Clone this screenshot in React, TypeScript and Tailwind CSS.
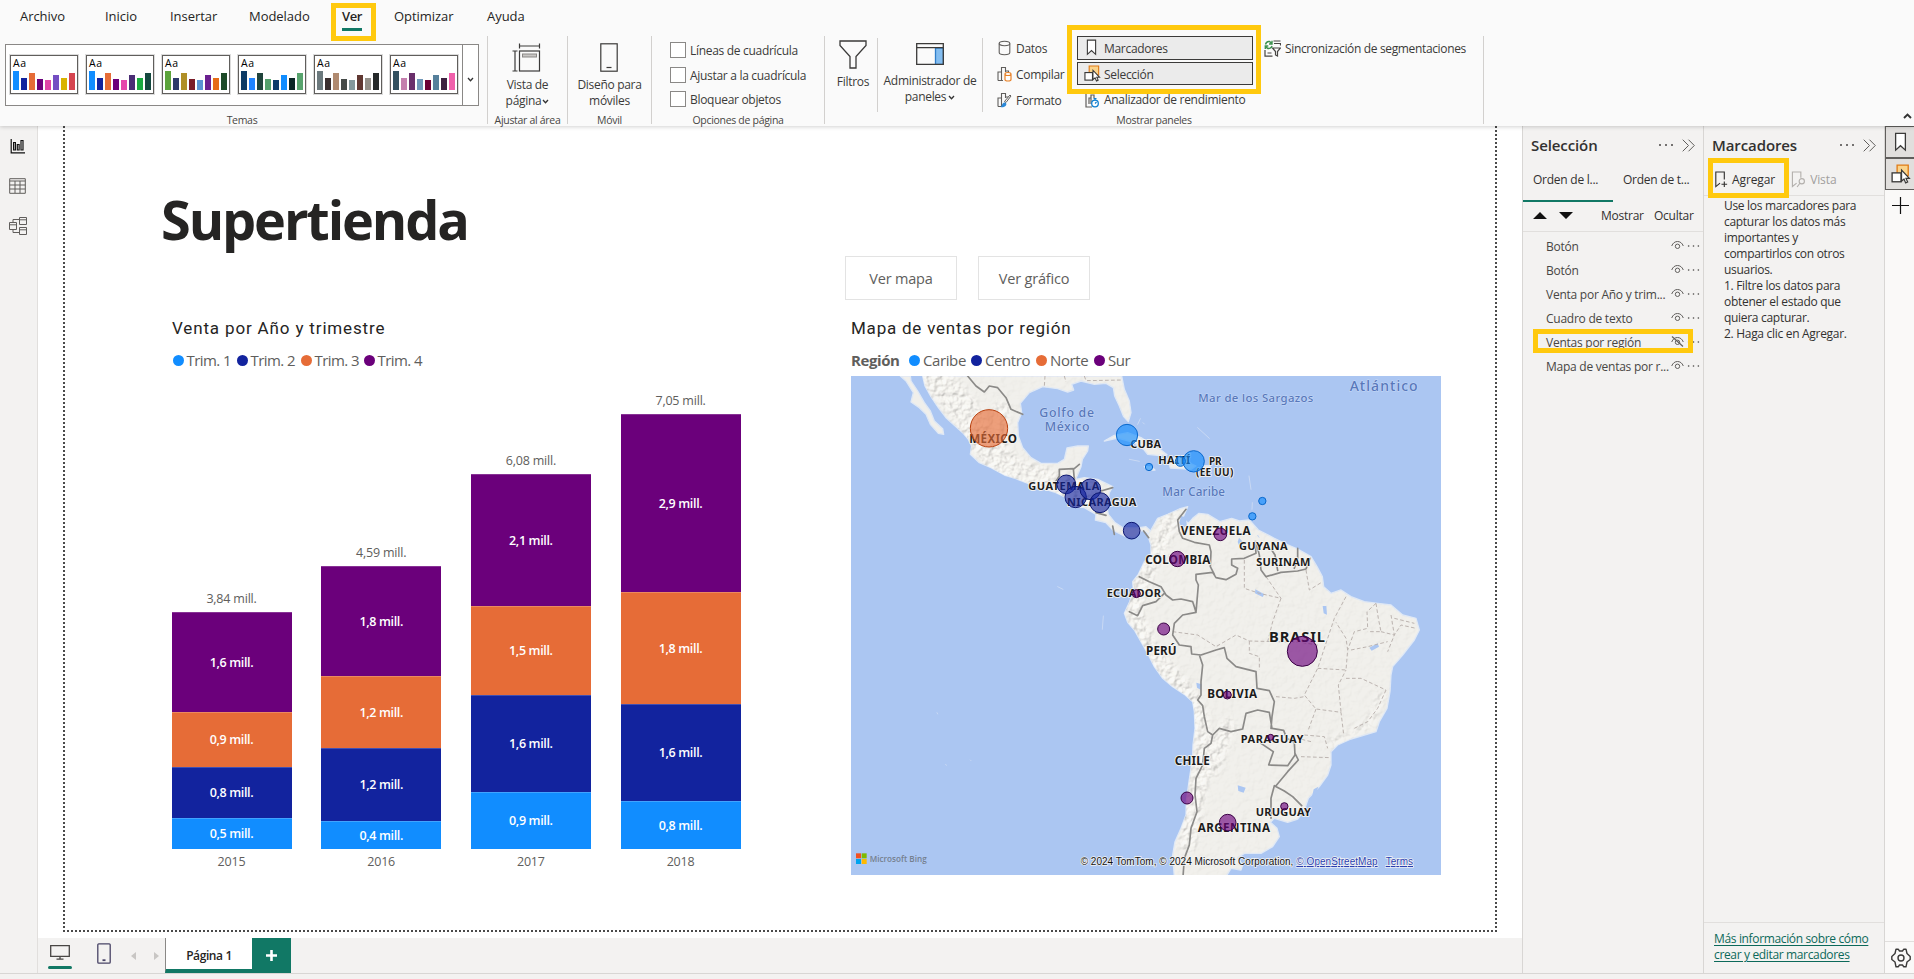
import React from "react";

type Box = { children?: React.ReactNode; className?: string };

const menu = [
  { label: "Archivo", w: "w-[85px]" },
  { label: "Inicio", w: "w-[65px]" },
  { label: "Insertar", w: "w-[79px]" },
  { label: "Modelado", w: "w-[93px]" },
  { label: "Ver", w: "w-[52px]" },
  { label: "Optimizar", w: "w-[93px]" },
  { label: "Ayuda", w: "w-[60px]" },
];

const themes = [
  ["#118DFF", "#12239E", "#E66C37", "#6B007B", "#E044A7", "#744EC2", "#D9B300", "#D64550"],
  ["#118DFF", "#12239E", "#E66C37", "#6B007B", "#E645AB", "#4A2D75", "#1AAB40", "#15483F"],
  ["#5BA33B", "#2D3A6B", "#B08F26", "#7A1C28", "#5B93D3", "#6B2090", "#E66C17", "#1D4A28"],
  ["#0D3B66", "#2083FF", "#20433C", "#54A06C", "#0C3A6B", "#118DFF", "#0A2525", "#58A46E"],
  ["#6C7A7E", "#3A2E2E", "#B08A70", "#454A48", "#84989C", "#603832", "#938F88", "#25292A"],
  ["#32505F", "#C47FAE", "#6A2F6B", "#6F97B8", "#6B0034", "#56809B", "#3D2040", "#F060AB"],
];
const themeHeights = [19, 12, 17, 11, 10, 15, 12, 17];

const years = [
  { year: "2015", total: "3,84 mill.", parts: [[100, "1,6 mill."], [55, "0,9 mill."], [51, "0,8 mill."], [31, "0,5 mill."]] },
  { year: "2016", total: "4,59 mill.", parts: [[110, "1,8 mill."], [72, "1,2 mill."], [73, "1,2 mill."], [28, "0,4 mill."]] },
  { year: "2017", total: "6,08 mill.", parts: [[132, "2,1 mill."], [89, "1,5 mill."], [97, "1,6 mill."], [57, "0,9 mill."]] },
  { year: "2018", total: "7,05 mill.", parts: [[178, "2,9 mill."], [112, "1,8 mill."], [97, "1,6 mill."], [48, "0,8 mill."]] },
];
const partColors = ["bg-[#6B007B]", "bg-[#E66C37]", "bg-[#12239E]", "bg-[#118DFF]"];

const layers = [
  { name: "Botón", hidden: false },
  { name: "Botón", hidden: false },
  { name: "Venta por Año y trim...", hidden: false },
  { name: "Cuadro de texto", hidden: false },
  { name: "Ventas por región", hidden: true },
  { name: "Mapa de ventas por r...", hidden: false },
];

function Divider({ className = "" }: Box) {
  return <div className={`w-px shrink-0 bg-[#d2d0ce] ${className}`} />;
}

function Caption({ children, className = "" }: Box) {
  return (
    <div className={`mt-auto h-[13px] whitespace-nowrap text-center text-[10.5px] leading-[14px] tracking-[-0.3px] text-[#484644] ${className}`}>
      {children}
    </div>
  );
}

function Chevron({ className = "" }: Box) {
  return (
    <svg viewBox="0 0 8 6" className={`h-[5px] w-[7px] ${className}`} fill="none" stroke="#333" strokeWidth="1.6">
      <path d="M1 1.2 4 4.4 7 1.2" />
    </svg>
  );
}

function Bookmark({ className = "" }: Box) {
  return (
    <svg viewBox="0 0 12 18" className={className} fill="#fff" stroke="#3b3a39" strokeWidth="1.2">
      <path d="M1.5 1h9v15.500L6 12.400 1.5 16.500z" />
    </svg>
  );
}

function SelectionIcon({ className = "" }: Box) {
  return (
    <svg viewBox="0 0 18 18" className={className} fill="none">
      <path d="M5.500 1h10v9.500h-10z" fill="#fbd38a" stroke="#e07b16" strokeWidth="1.2" />
      <rect x="1" y="8" width="8" height="8" fill="#fff" stroke="#3b3a39" strokeWidth="1.2" />
      <path d="M9.500 5.500v10l2.200-2 1.500 3.500 1.800-.8-1.500-3.200h3z" fill="#fff" stroke="#3b3a39" strokeWidth="1.100" />
    </svg>
  );
}

function BarsIcon() {
  return <path d="M1 14.500V6h3.500M4.500 14.500v-13h4V6M1 14.500h5M8.500 5h3v2" stroke="#605e5c" strokeWidth="1.1" fill="none" />;
}

function Dots({ className = "" }: Box) {
  return (
    <svg viewBox="0 0 16 4" className={className} fill="#484644">
      <circle cx="2" cy="2" r="1" />
      <circle cx="8" cy="2" r="1" />
      <circle cx="14" cy="2" r="1" />
    </svg>
  );
}

function DoubleChevron() {
  return (
    <svg viewBox="0 0 13 13" className="h-[13px] w-[13px]" fill="none" stroke="#605e5c" strokeWidth="1">
      <path d="M.7.7 6.500 6.500.7 12.300M6.500.7l5.800 5.800-5.800 5.800" />
    </svg>
  );
}

function Eye({ off }: { off: boolean }) {
  return (
    <svg viewBox="0 0 13 11" className="h-[11px] w-[13px]" fill="none" stroke="#605e5c" strokeWidth="1">
      <path d="M.7 6C1.800 3 4 1.500 6.500 1.500S11.200 3 12.300 6" />
      <circle cx="6.500" cy="6.300" r="2.200" />
      {off && <path d="M1 .5 12 10.500" strokeWidth="1.200" />}
    </svg>
  );
}

function Highlight({ className = "" }: Box) {
  return <div className={`pointer-events-none absolute z-20 border-[5px] border-[#ffc90e] ${className}`} />;
}

function Legend({ color, children, className = "" }: Box & { color: string }) {
  return (
    <div className={`flex shrink-0 items-center gap-[3px] ${className}`}>
      <span className={`h-[11px] w-[11px] rounded-full ${color}`} />
      <span className="whitespace-nowrap">{children}</span>
    </div>
  );
}

function Ribbon() {
  return (
    <header className="relative z-10 flex h-[126px] shrink-0 flex-col bg-[#fafafa] shadow-[0_1px_4px_rgba(0,0,0,0.18)]">
      <nav className="flex h-[36px] pl-[20px] text-[13px] leading-[32px] tracking-[-0.05px] text-[#252423]">
        {menu.map((m) => (
          <div key={m.label} className={`${m.w} whitespace-nowrap`}>
            {m.label === "Ver" ? (
              <span className="inline-flex h-[31px] flex-col border-b-[3px] border-[#117865] font-semibold tracking-[-0.4px]">{m.label}</span>
            ) : (
              m.label
            )}
          </div>
        ))}
      </nav>

      <div className="flex h-[90px] text-[12px] tracking-[-0.3px] text-[#3b3a39]">
        <section className="flex w-[487px] flex-col pt-[8px]">
          <div className="ml-[5px] flex h-[62px] w-[474px] border border-[#8a8886] bg-white">
            <div className="flex w-[457px] gap-[8px] border-r border-[#8a8886] pl-[4px] pt-[10px]">
              {themes.map((t, i) => (
                <div key={i} className="flex h-[39px] w-[68px] shrink-0 flex-col justify-between border border-[#605e5c] bg-white px-[2px] pb-[3px] shadow-[0_0_0_1px_#dcdcdc]">
                  <div className="h-[14px] text-[10.5px] leading-[15px] tracking-[0.7px] text-black">Aa</div>
                  <div className="flex h-[19px] items-end gap-[2px]">
                    {t.map((c, j) => (
                      <div key={j} className="w-[6px]" style={{ height: themeHeights[j], background: c }} />
                    ))}
                  </div>
                </div>
              ))}
            </div>
            <div className="flex flex-1 items-center justify-center pt-[8px]">
              <Chevron className="w-[6px]" />
            </div>
          </div>
          <Caption className="pr-[3px]">Temas</Caption>
        </section>
        <Divider className="h-[88px]" />

        <section className="flex w-[79px] flex-col items-center pt-[7px]">
          <svg viewBox="0 0 29 29" className="mr-[2px] h-[29px] w-[29px]" fill="none" stroke="#3b3a39" strokeWidth="1.200">
            <path d="M7.500 3h20M7.500.5v5M27.500.5v5M3 8v20M.5 8h5M.5 28h5" />
            <rect x="7.500" y="8" width="20" height="20" />
            <rect x="10.500" y="11" width="14" height="3" fill="#c8c6c4" stroke="#8a8886" strokeWidth="1" />
          </svg>
          <div className="mt-[5px] text-center leading-[16px]">
            Vista de
            <div className="flex items-center gap-[1px]">
              página <Chevron />
            </div>
          </div>
          <Caption>Ajustar al área</Caption>
        </section>
        <Divider className="h-[88px]" />

        <section className="flex w-[83px] flex-col items-center pt-[7px]">
          <svg viewBox="0 0 18 29" className="mr-[2px] h-[29px] w-[18px]" fill="none" stroke="#3b3a39" strokeWidth="1.200">
            <rect x=".8" y=".8" width="16.400" height="27.400" />
            <path d="M6.500 24.500h5" />
          </svg>
          <div className="mt-[5px] whitespace-nowrap text-center leading-[16px]">
            Diseño para
            <br />
            móviles
          </div>
          <Caption>Móvil</Caption>
        </section>
        <Divider className="h-[88px]" />

        <section className="flex w-[172px] flex-col pt-[6px]">
          <div className="flex flex-col gap-[8px] pl-[18px]">
            {["Líneas de cuadrícula", "Ajustar a la cuadrícula", "Bloquear objetos"].map((l) => (
              <label key={l} className="flex h-[16.500px] items-center gap-[4px] whitespace-nowrap">
                <span className="h-[16px] w-[16px] border border-[#8a8886] bg-white" />
                <span className="pt-[2px] leading-[16px]">{l}</span>
              </label>
            ))}
          </div>
          <Caption>Opciones de página</Caption>
        </section>
        <Divider className="h-[88px]" />

        <section className="flex w-[658px] flex-col">
          <div className="flex h-[77px]">
            <div className="flex w-[52px] flex-col items-center pt-[4px]">
              <svg viewBox="0 0 28 29" className="ml-[4px] h-[29px] w-[28px]" fill="none" stroke="#3b3a39" strokeWidth="1.300">
                <path d="M1 1h26v4.500L17 16.500V28h-6V16.500L1 5.500z" />
              </svg>
              <div className="ml-[4px] mt-[4px] leading-[17px]">Filtros</div>
            </div>
            <Divider className="mt-[2px] h-[74px]" />
            <div className="flex w-[104px] flex-col items-center whitespace-nowrap pt-[7px]">
              <svg viewBox="0 0 28 22" className="h-[22px] w-[28px]" fill="none" stroke="#3b3a39" strokeWidth="1.300">
                <rect x="19.500" y="5" width="8" height="16.500" fill="#83bdf0" stroke="#2f7ec9" />
                <path d="M.7.7h26.600v20.600H.7zM.7 4.700h26.600" />
              </svg>
              <div className="mt-[8px] text-center leading-[16px]">
                Administrador de
                <div className="flex items-center justify-center gap-[2px]">
                  paneles <Chevron />
                </div>
              </div>
            </div>
            <Divider className="mt-[2px] h-[74px]" />
            <div className="flex w-[94px] flex-col pl-[14px] leading-[26px]">
              <div className="flex h-[26px] items-center gap-[4px]">
                <svg viewBox="0 0 15 16" className="mt-[-2px] h-[16px] w-[15px]" fill="none" stroke="#605e5c" strokeWidth="1.100">
                  <ellipse cx="7.500" cy="3.500" rx="5.300" ry="2.200" />
                  <path d="M2.200 3.500v9c0 1.200 2.300 2.200 5.300 2.200s5.300-1 5.300-2.200v-9" />
                </svg>
                Datos
              </div>
              <div className="flex h-[26px] items-center gap-[4px]">
                <svg viewBox="0 0 15 16" className="mt-[-2px] h-[16px] w-[15px]" fill="none">
                  <BarsIcon />
                  <path d="M8 8v5.500c0 1 1.300 1.500 3 1.500s3-.5 3-1.500V8c0-1-1.300-1.500-3-1.500S8 7 8 8s1.300 1.500 3 1.500S14 9 14 8" fill="#fff" stroke="#e8832a" strokeWidth="1.200" />
                </svg>
                Compilar
              </div>
              <div className="flex h-[26px] items-center gap-[4px]">
                <svg viewBox="0 0 15 16" className="mt-[-2px] h-[16px] w-[15px]" fill="none">
                  <BarsIcon />
                  <path d="m14 4-5 6.500-1.500-1L13 3z" fill="#fff" stroke="#605e5c" />
                  <path d="M3.500 15c1.500-.5 1.500-4.500 4-4.500 2 0 2.500 2 1 3.500s-4 1.500-5 1z" fill="#2b88d8" />
                </svg>
                Formato
              </div>
            </div>
            <div className="flex w-[176px] flex-col gap-[2px]">
              <div className="flex h-[24px] items-center border border-[#3b3a39] bg-[#ebebeb] pl-[8px]">
                <Bookmark className="mr-[7px] h-[17px] w-[11px]" />
                <span className="pt-[2px]">Marcadores</span>
              </div>
              <div className="flex h-[24px] items-center border border-[#3b3a39] bg-[#ebebeb] pl-[6px]">
                <SelectionIcon className="mr-[3px] h-[17px] w-[17px]" />
                <span className="pt-[2px]">Selección</span>
              </div>
              <div className="flex h-[26px] items-center whitespace-nowrap pl-[8px]">
                <svg viewBox="0 0 15 16" className="mr-[4px] h-[16px] w-[15px]" fill="none">
                  <path d="M1 1v14h6M4 12V6h2M6 12V3h3v3" stroke="#605e5c" strokeWidth="1.200" />
                  <circle cx="10" cy="11.500" r="3.300" stroke="#0f7fd0" strokeWidth="1.300" fill="#fff" />
                  <path d="M10 7v1.500M8.500 6.500h3M10 11.500l1.500-1.500" stroke="#0f7fd0" strokeWidth="1.200" />
                </svg>
                Analizador de rendimiento
              </div>
            </div>
            <div className="flex h-[26px] items-center whitespace-nowrap pl-[11px] tracking-[-0.35px]">
              <svg viewBox="0 0 17 17" className="mr-[4px] mt-[-2px] h-[17px] w-[17px]" fill="none" stroke="#484644" strokeWidth="1.200">
                <path d="M9.500 1h7M10 3.500h6.500v2M1 10v6.200h7.500M3.500 13h4" />
                <path d="M8.500 8h8l-3 3.500V16l-2-1v-3.500z" />
                <path d="M1.500 4.500C2 2.300 3.500 1.200 5.500 1.500L8 3.700M8 .8v3.200H5M8 6C7.500 8.200 5 9 3 8L1.300 6.200M1.300 9V6h3" stroke="#3d9150" strokeWidth="1.400" />
              </svg>
              Sincronización de segmentaciones
            </div>
          </div>
          <Caption>Mostrar paneles</Caption>
        </section>
        <Divider className="h-[88px]" />
        <div className="flex flex-1 items-end justify-end pb-[7px] pr-[2px]">
          <svg viewBox="0 0 9 6" className="h-[6px] w-[9px]" fill="none" stroke="#333" strokeWidth="1.900">
            <path d="M1 5 4.500 1.500 8 5" />
          </svg>
        </div>
      </div>
      <Highlight className="left-[331px] top-[3px] h-[38px] w-[45px]" />
      <Highlight className="left-[1067px] top-[25px] h-[69px] w-[194px]" />
    </header>
  );
}

const bubbles: [number, number, number, string][] = [
  [414, 157, 56, "o"],
  [828, 177, 32, "c"],
  [1028, 256, 32, "c"],
  [988, 256, 15, "c"],
  [894, 273, 11, "c"],
  [1234, 375, 11, "c"],
  [1204, 421, 11, "c"],
  [646, 325, 28, "b"],
  [674, 363, 32, "b"],
  [718, 340, 31, "b"],
  [747, 380, 30, "b"],
  [842, 464, 25, "b"],
  [1108, 475, 19, "p"],
  [979, 549, 23, "p"],
  [856, 653, 12, "p"],
  [938, 759, 18, "p"],
  [1354, 826, 45, "p"],
  [1129, 957, 12, "p"],
  [1259, 1084, 9, "p"],
  [1008, 1266, 18, "p"],
  [1130, 1340, 25, "p"],
  [1300, 1291, 11, "p"],
];
const bubbleFill: Record<string, string> = { o: "#E66C37", c: "#118DFF", b: "#12239E", p: "#6B007B" };
const bubbleStroke: Record<string, string> = { o: "#b8400e", c: "#0a68cc", b: "#0a1570", p: "#3a0045" };

const countries: [string, number, number, number, number][] = [
  ["MÉXICO", 355, 201, 143, 35],
  ["CUBA", 838, 215, 92, 33],
  ["HAITÍ", 922, 263, 96, 33],
  ["PR", 1074, 267, 38, 30],
  ["(EE UU)", 1035, 299, 112, 30],
  ["GUATEMALA", 532, 342, 213, 33],
  ["NICARAGUA", 648, 390, 208, 33],
  ["VENEZUELA", 989, 476, 210, 35],
  ["GUYANA", 1164, 523, 146, 33],
  ["SURINAM", 1216, 570, 162, 33],
  ["COLOMBIA", 883, 563, 195, 35],
  ["ECUADOR", 767, 664, 163, 33],
  ["BRASIL", 1254, 797, 168, 44],
  ["PERÚ", 885, 838, 92, 35],
  ["BOLIVIA", 1069, 966, 149, 35],
  ["PARAGUAY", 1169, 1100, 188, 33],
  ["CHILE", 971, 1167, 105, 35],
  ["URUGUAY", 1214, 1321, 166, 33],
  ["ARGENTINA", 1040, 1368, 217, 35],
];
const waters: [string, number, number, number, number][] = [
  ["Golfo de", 565, 124, 164, 37],
  ["México", 581, 165, 135, 37],
  ["Mar de los Sargazos", 1042, 79, 345, 34],
  ["Atlántico", 1496, 45, 204, 42],
  ["Mar Caribe", 934, 360, 188, 35],
];

const northLand =
  "M215 0 222 30 240 62 262 95 285 125 310 148 335 170 352 190 362 210 358 235 385 260 420 275 460 297 495 308 535 324 575 337 610 348 640 362 670 392 700 395 735 415 733 432 765 440 788 464 820 480 850 485 872 463 888 470 897 492 905 470 885 452 860 456 815 455 792 440 772 415 768 395 775 350 785 332 765 322 740 310 700 305 674 310 690 272 694 250 710 225 712 210 680 210 648 216 640 250 620 262 570 262 540 245 515 215 502 180 500 140 512 110 508 82 535 50 575 32 620 38 650 48 668 42 662 25 690 15 730 25 765 22 787 35 791 60 805 90 818 122 832 137 840 110 835 75 820 40 812 0Z";
const baja = "M148 0 165 15 187 50 180 78 205 95 225 115 238 145 262 172 278 175 275 158 250 135 238 105 220 80 200 45 180 15 178 0Z";
const islands =
  "M760 195 790 178 830 170 870 185 900 205 930 222 948 236 920 238 890 235 880 222 850 200 800 186ZM950 247 985 245 1010 258 1035 270 1020 280 985 278 958 276ZM1056 270 1078 268 1078 276 1058 277ZM880 272 900 272 912 282 890 283Z";
const southLand =
  "M140 0 150 30 150 60 130 80 112 118 95 140 97 165 86 200 70 235 80 262 100 285 120 320 140 355 160 395 185 430 215 455 250 478 275 500 280 530 282 580 276 630 275 660 270 700 264 740 256 800 255 840 240 880 222 920 215 960 220 1025 375 1025 390 1000 420 1005 425 990 410 968 430 955 480 955 515 935 535 905 528 880 508 862 520 850 560 862 590 852 610 825 622 790 655 755 680 720 690 690 690 650 710 630 750 612 790 600 825 590 835 560 858 520 867 470 870 420 875 395 905 360 940 315 955 285 945 250 905 240 870 210 830 205 790 200 750 185 720 165 690 175 668 155 664 125 648 95 630 65 590 42 555 27 520 10 472-15 445-45 415-42 392-50 356-40 320-62 294-65 275-50 262-35 245-50 260-85 235-78 200-62 170-50 150-15Z";
const southBorders =
  "M255-77 230-45 235-10 245 10 280 22 325 30 330 50 328 95 340 118M285 118 335 112 345 128 375 134 405 118 410 100 392 90 392 72 430 70 465 55 462 20M285 118 285 135 292 150 285 232M115 125 145 140 180 155 195 180 215 195 240 192 275 200 280 215 285 232M85 230 110 242 125 212 165 200 190 175M285 232 245 240 220 265 215 300 235 330 270 335 272 357 300 360 345 345 370 338 378 370 405 395 465 410 468 460 505 467 520 500 513 545 510 580M295 360 305 390 300 440 300 480 290 495 305 512 310 545 320 590 335 600 355 580 390 590 425 582 435 535 470 525 505 532 513 580 548 586 557 610 580 622 582 660 560 692 503 690 517 650 480 625M582 655 592 675 560 710 525 752M510 850 510 790 520 752 550 768 575 785 602 812M335 600 330 625 310 640 305 690 285 730 282 780 288 830 270 880 265 930 250 970 246 1025M465 20 475 60 480 105 495 125 540 112 590 108 615 102 627 70M530 106 522 60 512 45M590 40 590 70 580 100";
const states =
  "M540 190 515 260 505 300 500 320M215 290 290 300 345 335 405 300 445 318 600 322 650 330M445 318 445 355 475 365 475 405M735 185 700 250 680 310 650 400 610 480 645 522 720 532 728 598M650 400 735 405 740 345 735 310 705 262M825 205 798 230 800 280 760 290 740 345M825 205 832 250 840 290 800 290M735 430 780 430 855 465M720 530 712 450 735 405M525 485 580 490 610 485M645 522 620 590M610 600 670 605 680 640M430 75 430 160 475 175 540 190M495 125 540 190M615 105 625 165 665 140M600 665 688 668M840 290 880 300 900 270 945 280M870 240 880 300 860 350M880 250 940 265M750 345 800 335 860 320M855 465 830 520 800 560 760 580M630 620 590 610";

function SalesMap() {
  return (
    <svg viewBox="0 0 1770 1497" className="h-[499px] w-[590px]" preserveAspectRatio="none">
      <defs>
        <filter id="relief" x="0" y="0" width="100%" height="100%">
          <feTurbulence type="fractalNoise" baseFrequency="0.055" numOctaves="4" seed="8" />
          <feDiffuseLighting lightingColor="#f8f6f2" surfaceScale="7" diffuseConstant="1.15">
            <feDistantLight azimuth="225" elevation="58" />
          </feDiffuseLighting>
        </filter>
        <filter id="soft">
          <feGaussianBlur stdDeviation="9" />
        </filter>
        <clipPath id="land">
          <path d={northLand} />
          <path d={southLand} transform="translate(750 477)" />
        </clipPath>
        <mask id="ranges">
          <g filter="url(#soft)" fill="none" stroke="#fff" strokeLinecap="round" strokeLinejoin="round">
            <path d="M250 0 330 90 400 200 480 285 620 335 700 350" strokeWidth="85" />
            <path d="M450 100 440 200" strokeWidth="50" />
            <path d="M960 430 920 520 880 600 845 700 900 830 1000 940 1045 1020 1060 1110 1030 1290 1010 1400" strokeWidth="50" />
            <path d="M1130 1050 1080 1180" strokeWidth="45" />
            <path d="M1590 960 1560 1040 1440 1100" strokeWidth="26" opacity=".6" />
          </g>
        </mask>
      </defs>
      <rect width="1770" height="1497" fill="#abc6f2" />
      <g fill="#f0efeb" stroke="#dfe8f5" strokeWidth="4" strokeLinejoin="round">
        <path d={northLand} />
        <path d={baja} />
        <path d={islands} />
        <path d={southLand} transform="translate(750 477)" />
      </g>
      <g clipPath="url(#land)">
        <rect width="1770" height="1497" filter="url(#relief)" opacity=".08" />
        <g mask="url(#ranges)">
          <rect width="1770" height="1497" filter="url(#relief)" opacity=".6" />
        </g>
      </g>
      <g fill="#abc6f2">
        <path d="M990 420 1004 424 1008 450 992 455 985 440ZM1164 485 1178 500 1166 512 1160 498ZM1213 640 1240 655 1235 663 1212 652ZM1415 690 1426 690 1428 716 1418 712ZM1555 815 1580 802 1584 812 1562 824ZM1036 920 1052 925 1050 942 1038 935ZM1160 1228 1184 1235 1178 1250 1162 1245ZM1388 1240 1402 1232 1392 1262 1384 1258Z" />
      </g>
      <g fill="none" stroke="#c9d9f4" strokeWidth="3" strokeLinecap="round">
        <path d="M1040 155 1075 187M860 145 868 128M620 632 636 640M1194 300 1200 340M1204 380 1203 400M258 1010 260 1014M757 720 754 760M284 1165 286 1168M358 1152 360 1154M1220 478 1224 484M876 140 880 144M835 250 865 256" />
      </g>
      <g fill="none" stroke="#bcb4b0" strokeWidth="3" strokeDasharray="11 7">
        <path d={states} transform="translate(750 477)" />
        <path d="M582 0 580 32M640 0 645 18M700 0 705 14 815 12" />
      </g>
      <g fill="none" stroke="#8b8a88" strokeWidth="5" strokeLinejoin="round" strokeLinecap="round">
        <path d="M350 0 375 30 400 48 415 30 440 35 465 65 480 100 515 115M612 320 625 300 625 280 667 278 670 310M667 280 685 265M750 345 785 335M735 410 765 418M785 450 790 475M878 465 893 485" />
        <path d={southBorders} transform="translate(750 477)" />
      </g>
      <g className="font-['Noto_Sans']" fill="#5878bb" stroke="#c8daf6" strokeWidth="3" paintOrder="stroke" fontWeight="500">
        {waters.map(([t, x, y, w, s]) => (
          <text key={t} x={x} y={y} fontSize={s} textLength={w}>
            {t}
          </text>
        ))}
      </g>
      <g className="font-['Noto_Sans']" fill="#1c1c1c" stroke="#f7f6f3" strokeWidth="5" paintOrder="stroke" strokeLinejoin="round" fontWeight="700">
        {countries.map(([t, x, y, w, s]) => (
          <text key={t} x={x} y={y} fontSize={s} textLength={w}>
            {t}
          </text>
        ))}
      </g>
      {bubbles.map(([x, y, r, k], i) => (
        <circle key={i} cx={x} cy={y} r={r} fill={bubbleFill[k]} fillOpacity=".64" stroke={bubbleStroke[k]} strokeWidth="3" />
      ))}
      <rect x="15" y="1432" width="15" height="15" fill="#f25022" />
      <rect x="32" y="1432" width="15" height="15" fill="#7fba00" />
      <rect x="15" y="1449" width="15" height="15" fill="#00a4ef" />
      <rect x="32" y="1449" width="15" height="15" fill="#ffb900" />
      <text className="font-['Open_Sans']" x="56" y="1459" fontSize="29" fontWeight="600" fill="#75808f" textLength="171" lengthAdjust="spacingAndGlyphs">
        Microsoft Bing
      </text>
      <g className="font-['Liberation_Sans']" fontSize="30" stroke="#f4f4f4" strokeWidth="4" paintOrder="stroke" fill="#111">
        <text x="689" y="1467" textLength="638">
          © 2024 TomTom, © 2024 Microsoft Corporation,
        </text>
        <text x="1336" y="1467" textLength="244" fill="#2b3fb0" textDecoration="underline">
          © OpenStreetMap
        </text>
        <text x="1604" y="1467" textLength="82" fill="#2b3fb0" textDecoration="underline">
          Terms
        </text>
      </g>
    </svg>
  );
}

function Canvas() {
  return (
    <div className="h-[812px] bg-white pl-[25px]">
      <div className="h-[806px] w-[1434px] border-2 border-t-0 border-dotted border-[#4a4a4a]">
        <h1 className="h-[130px] pl-[96px] pt-[57px] text-[54px] font-bold leading-[72px] tracking-[-2.1px] text-[#252423]">Supertienda</h1>
        <div className="flex gap-[21px] pl-[780px] text-[14.5px] tracking-[-0.2px] text-[#605e5c]">
          <button className="h-[44px] w-[112px] border border-[#e3e3e3] pt-[2px]">Ver mapa</button>
          <button className="h-[44px] w-[112px] border border-[#e3e3e3] pt-[2px]">Ver gráfico</button>
        </div>
        <div className="flex pl-[106.500px] pt-[16px]">
          <section className="w-[679.500px]">
            <h2 className="h-[24px] pl-[0.500px] font-['Roboto'] text-[17px] leading-[24px] tracking-[0.85px] text-[#252423]">Venta por Año y trimestre</h2>
            <div className="mt-[10px] flex h-[20px] pl-[1px] text-[15px] leading-[20px] tracking-[-0.55px] text-[#605e5c]">
              <Legend className="w-[64px]" color="bg-[#118DFF]">Trim. 1</Legend>
              <Legend className="w-[64px]" color="bg-[#12239E]">Trim. 2</Legend>
              <Legend className="w-[63px]" color="bg-[#E66C37]">Trim. 3</Legend>
              <Legend className="w-[64px]" color="bg-[#6B007B]">Trim. 4</Legend>
            </div>
            <div className="flex h-[503px] items-end gap-[29.700px]">
              {years.map((y) => (
                <div key={y.year} className="flex w-[120px] flex-col text-center text-[12.500px] tracking-[-0.2px] text-[#605e5c]">
                  <div className="h-[26px] leading-[26px]">{y.total}</div>
                  {y.parts.map(([h, label], i) => (
                    <div
                      key={i}
                      className={`flex items-center justify-center border-t border-white/20 pt-px font-semibold tracking-[-0.35px] text-white ${partColors[i]}`}
                      style={{ height: h as number }}
                    >
                      {label}
                    </div>
                  ))}
                  <div className="h-[24px] leading-[26px]">{y.year}</div>
                </div>
              ))}
            </div>
          </section>
          <section className="w-[590px]">
            <h2 className="h-[24px] font-['Roboto'] text-[17px] leading-[24px] tracking-[0.78px] text-[#252423]">Mapa de ventas por región</h2>
            <div className="mb-[6px] mt-[10px] flex h-[20px] text-[15px] leading-[20px] tracking-[-0.4px] text-[#605e5c]">
              <span className="w-[58px] font-bold">Región</span>
              <Legend className="w-[62px]" color="bg-[#118DFF]">Caribe</Legend>
              <Legend className="w-[65px]" color="bg-[#12239E]">Centro</Legend>
              <Legend className="w-[58px]" color="bg-[#E66C37]">Norte</Legend>
              <Legend className="w-[50px]" color="bg-[#6B007B]">Sur</Legend>
            </div>
            <SalesMap />
          </section>
        </div>
      </div>
    </div>
  );
}

function PageBar() {
  return (
    <div className="flex h-[35px] bg-[#f3f2f1] text-[12px] text-[#252423]">
      <div className="ml-[10px] flex w-[24px] flex-col items-center pt-[7px]">
        <svg viewBox="0 0 20 15" className="h-[15px] w-[20px]" fill="none" stroke="#484644" strokeWidth="1.300">
          <path d="M.7.7h18.600v10.600H.7zM10 11.500V14M6.500 14.200h7" />
        </svg>
        <div className="mt-[6px] h-[3px] w-[24px] rounded-sm bg-[#117865]" />
      </div>
      <svg viewBox="0 0 14 21" className="ml-[25px] mt-[5px] h-[21px] w-[14px]" fill="none" stroke="#484466" strokeWidth="1.300">
        <rect x=".8" y=".8" width="12.400" height="19.400" rx="1" />
        <path d="M5.500 17.200h3" strokeWidth="1.800" />
      </svg>
      <svg viewBox="0 0 28 8" className="ml-[20px] mt-[14px] h-[8px] w-[28px]" fill="#c8c6c4">
        <path d="M5 0v8L0 4zM23 0v8l5-4z" />
      </svg>
      <div className="ml-[6px] flex w-[87px] items-center justify-center border-b-4 border-l border-b-[#117865] border-l-[#8a8886] bg-white pt-[5px] font-semibold tracking-[-0.4px]">
        Página 1
      </div>
      <div className="flex w-[39px] items-center justify-center bg-[#117865]">
        <svg viewBox="0 0 11 11" className="h-[11px] w-[11px]" stroke="#fff" strokeWidth="2.600">
          <path d="M5.500 0v11M0 5.500h11" />
        </svg>
      </div>
    </div>
  );
}

function ViewRail() {
  return (
    <aside className="flex w-[38px] flex-col items-center border-r border-[#e1dfdd] bg-[#f3f2f1]">
      <svg viewBox="0 0 15 15" className="ml-[-2px] mt-[13px] h-[15px] w-[15px]" fill="none" stroke="#111" strokeWidth="1.200">
        <path d="M1.200 0v13.800H15M3.600 3.500h1.800v7.500H3.600zM7.300 5.500h1.800V11H7.300zM11 1.500h2V11h-2z" />
      </svg>
      <svg viewBox="0 0 17 16" className="ml-[-2px] mt-[24px] h-[16px] w-[17px]" fill="none" stroke="#605e5c" strokeWidth="1">
        <path d="M.7.7h15.600v14.600H.7zM.7 3h15.600M.7 7h15.600M.7 11h15.600M6 3v12M11 3v12" />
      </svg>
      <svg viewBox="0 0 18 18" className="ml-[-1px] mt-[23px] h-[18px] w-[18px]" fill="none" stroke="#605e5c" strokeWidth="1">
        <path d="M10.500.5h7v7h-7zM10.500 2.800h7M10.500 10.500h7v7h-7zM10.500 12.800h7M.5 5.500h7v7h-7zM.5 7.800h7M4 5.500v-3h6.500M4 12.500v3h6.500" />
      </svg>
    </aside>
  );
}

function SelectionPane() {
  return (
    <aside className="relative flex w-[181px] flex-col border-l border-[#d8d6d4] bg-[#f3f2f1] text-[12px] tracking-[-0.25px] text-[#323130]">
      <div className="flex h-[38px] items-center pl-[8px] pr-[8px] text-[15px] font-semibold tracking-[-0.1px]">
        Selección
        <Dots className="ml-auto mr-[8px] h-[4px] w-[16px]" />
        <DoubleChevron />
      </div>
      <div className="flex h-[38px]">
        <div className="w-[90px] whitespace-nowrap border-b-2 border-[#117865] pl-[10px] leading-[32px]">Orden de l...</div>
        <div className="w-[90px] whitespace-nowrap pl-[10px] leading-[32px]">Orden de t...</div>
      </div>
      <div className="flex h-[30px] items-center border-b border-[#e1dfdd] pb-[2px] pl-[10px]">
        <svg viewBox="0 0 40 7" className="mr-[28px] h-[7px] w-[40px]" fill="#111">
          <path d="M0 7 7 0l7 7zM26 0h14l-7 7z" />
        </svg>
        <span className="w-[53px]">Mostrar</span>
        <span>Ocultar</span>
      </div>
      <div className="flex flex-col pt-[2px] text-[#484644]">
        {layers.map((l, i) => (
          <div key={i} className="flex h-[24px] items-center whitespace-nowrap pl-[23px] pr-[3px]">
            <span className="pt-px">{l.name}</span>
            <span className="ml-auto mr-[3px] mt-[-1px]">
              <Eye off={l.hidden} />
            </span>
            <Dots className="mt-[-1px] h-[4px] w-[13px]" />
          </div>
        ))}
      </div>
      <Highlight className="left-[10px] top-[203px] h-[24px] w-[160px]" />
    </aside>
  );
}

function BookmarksPane() {
  return (
    <aside className="relative flex w-[181px] flex-col border-l border-[#d8d6d4] bg-[#f3f2f1] text-[12px] tracking-[-0.3px] text-[#323130]">
      <div className="flex h-[38px] items-center pl-[8px] pr-[8px] text-[15px] font-semibold tracking-[-0.1px]">
        Marcadores
        <Dots className="ml-auto mr-[8px] h-[4px] w-[16px]" />
        <DoubleChevron />
      </div>
      <div className="flex h-[32px] items-center border-b border-[#e1dfdd] pl-[10px] tracking-[-0.1px]">
        <svg viewBox="0 0 14 18" className="mr-[4px] h-[17px] w-[14px]" fill="none" stroke="#323130" strokeWidth="1.200">
          <path d="M10.500 9V1h-9v15.500L6 12.800M10.500 11v6M7.500 14h6" />
        </svg>
        Agregar
        <svg viewBox="0 0 16 18" className="ml-[16px] mr-[4px] h-[17px] w-[15px]" fill="none" stroke="#b3b0ad" strokeWidth="1.200">
          <path d="M10.500 7V1h-9v15.500L6 12.800" />
          <circle cx="11.500" cy="10.800" r="2.800" />
          <path d="m9.500 13-3 4" />
        </svg>
        <span className="text-[#a19f9d]">Vista</span>
      </div>
      <div className="whitespace-nowrap pl-[20px] pt-[2px] leading-[16px]">
        Use los marcadores para
        <br />
        capturar los datos más
        <br />
        importantes y
        <br />
        compartirlos con otros
        <br />
        usuarios.
        <br />
        1. Filtre los datos para
        <br />
        obtener el estado que
        <br />
        quiera capturar.
        <br />
        2. Haga clic en Agregar.
      </div>
      <div className="mt-auto h-[51px] whitespace-nowrap border-t border-[#e1dfdd] pl-[10px] pt-[8px] leading-[16px] tracking-[-0.35px] text-[#0c695a] underline underline-offset-2">
        Más información sobre cómo
        <br />
        crear y editar marcadores
      </div>
      <Highlight className="left-[4px] top-[32px] h-[40px] w-[81px]" />
    </aside>
  );
}

function PaneRail() {
  return (
    <aside className="flex flex-1 flex-col items-center border-l border-[#d8d6d4] bg-[#faf9f8]">
      <div className="flex h-[32px] w-full items-center justify-center border border-r-0 border-[#605e5c] bg-[#e1dfdd]">
        <Bookmark className="ml-[1px] h-[20px] w-[13px]" />
      </div>
      <div className="flex h-[32px] w-full items-center justify-center border border-r-0 border-[#605e5c] bg-[#e1dfdd]">
        <SelectionIcon className="ml-[2px] h-[20px] w-[20px]" />
      </div>
      <svg viewBox="0 0 17 17" className="ml-[2px] mt-[7px] h-[17px] w-[17px]" stroke="#111" strokeWidth="1.200">
        <path d="M8.500 0v17M0 8.500h17" />
      </svg>
      <div className="mt-auto flex h-[32px] w-full items-center justify-center border-t border-[#e1dfdd]">
        <svg viewBox="0 0 20 20" className="ml-[2px] h-[20px] w-[20px]" fill="none" stroke="#3b3a39" strokeWidth="1.400" strokeLinejoin="round">
          <path d="M5 1.200h2.200L8.500 3h3l1.300-1.800H15L16 5.500l3.200 3v3L16 14l-1 4.800h-2.200L11.500 17h-3l-1.300 1.800H5L4 14 .8 11.500v-3l3.200-3z" />
          <circle cx="10" cy="10" r="3" />
        </svg>
      </div>
    </aside>
  );
}

export default function App() {
  return (
    <div className="flex h-[979px] w-[1914px] flex-col overflow-hidden bg-[#f3f2f1] font-['Open_Sans','Noto_Sans',sans-serif]">
      <Ribbon />
      <main className="flex h-[847px] shrink-0">
        <ViewRail />
        <div className="flex w-[1484px] flex-col">
          <Canvas />
          <PageBar />
        </div>
        <SelectionPane />
        <BookmarksPane />
        <PaneRail />
      </main>
      <footer className="h-[6px] border-t border-[#d8d6d4]" />
    </div>
  );
}
